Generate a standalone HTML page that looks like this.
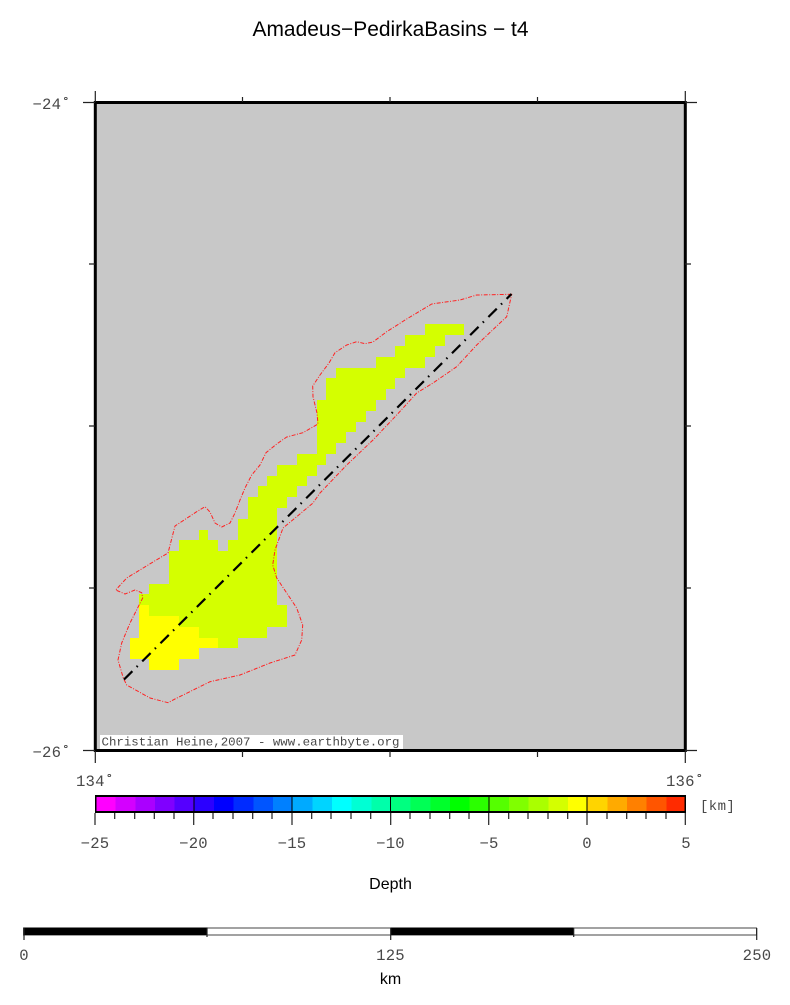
<!DOCTYPE html>
<html><head><meta charset="utf-8"><style>
html,body{margin:0;padding:0;background:#fff;width:790px;height:1005px;overflow:hidden}
svg{display:block}
.m{font-family:"Liberation Mono",monospace;font-size:15.6px;fill:#484848;letter-spacing:0.2px}
.s{font-family:"Liberation Sans",sans-serif;fill:#000}
</style></head><body>
<svg width="790" height="1005" viewBox="0 0 790 1005" xmlns="http://www.w3.org/2000/svg">
<text class="s" x="252.5" y="36" font-size="21" textLength="276" lengthAdjust="spacingAndGlyphs">Amadeus−PedirkaBasins − t4</text>
<rect x="95" y="102" width="590" height="648" fill="#c8c8c8"/>
<g fill="#d4ff00" shape-rendering="crispEdges">
<rect x="425" y="324" width="39" height="11"/><rect x="405" y="335" width="40" height="11"/><rect x="395" y="346" width="40" height="11"/><rect x="376" y="357" width="49" height="11"/><rect x="336" y="368" width="69" height="10"/><rect x="326" y="378" width="69" height="11"/><rect x="326" y="389" width="60" height="11"/><rect x="317" y="400" width="59" height="11"/><rect x="317" y="411" width="49" height="11"/><rect x="317" y="422" width="39" height="10"/><rect x="317" y="432" width="29" height="11"/><rect x="317" y="443" width="19" height="11"/><rect x="297" y="454" width="29" height="11"/><rect x="277" y="465" width="40" height="11"/><rect x="267" y="476" width="40" height="10"/><rect x="258" y="486" width="39" height="11"/><rect x="248" y="497" width="39" height="11"/><rect x="248" y="508" width="29" height="11"/><rect x="238" y="519" width="39" height="11"/><rect x="199" y="530" width="9" height="10"/><rect x="238" y="530" width="39" height="10"/><rect x="179" y="540" width="39" height="11"/><rect x="228" y="540" width="49" height="11"/><rect x="169" y="551" width="108" height="33"/><rect x="149" y="584" width="128" height="10"/><rect x="139" y="594" width="138" height="11"/><rect x="149" y="605" width="138" height="11"/><rect x="179" y="616" width="108" height="11"/><rect x="199" y="627" width="68" height="11"/><rect x="218" y="638" width="20" height="10"/>
</g>
<g fill="#ffff00" shape-rendering="crispEdges">
<rect x="139" y="605" width="10" height="11"/><rect x="139" y="616" width="40" height="11"/><rect x="139" y="627" width="60" height="11"/><rect x="130" y="638" width="88" height="10"/><rect x="130" y="648" width="69" height="11"/><rect x="149" y="659" width="30" height="11"/>
</g>
<path d="M511.7 294.3L476.7 295L460 300L431.7 304L406.7 319L386.7 331.7L373 342L365 343.7L356.7 341.7L346.7 345L335 352.7L329 363L320 375L312.7 386L313 396.7L317 413L318 424L303 432.7L286.7 437L276.7 444L266 452.7L260 465L251.7 475L245 488L240 500L235 513L230 523L221.7 527L215 523L210 512L205 506.7L196.7 511.7L175 526L168 553L153 562L126.7 578L115.7 590L125 594L135 590L141.7 592.7L142.7 598L130 623L121.7 643L118 660L123.3 678L126.7 685L150 698L168 702.7L175 699L210 681.7L240 675L270 663L295 655L301.7 640L302.7 625L296.7 608L276.7 578L272.7 565L275 550L283 528L296.7 516.7L313 503L320 493L346.7 465L373 440L396.7 415L416.7 393L433 383L456.7 366.7L476.7 345L506.7 316.7Z" fill="none" stroke="#f22" stroke-width="1" stroke-dasharray="4 1.5 1 1.5" stroke-linejoin="round"/>
<path d="M124 679.5L511.5 294" fill="none" stroke="#000" stroke-width="2.2" stroke-dasharray="11.8 6 1.5 6.4"/>
<rect x="100" y="735" width="303" height="14" fill="#fff"/>
<text x="101.5" y="745.5" font-family="'Liberation Mono',monospace" font-size="12.4" fill="#484848" textLength="298" lengthAdjust="spacingAndGlyphs">Christian Heine,2007 - www.earthbyte.org</text>
<rect x="95.3" y="102.5" width="590" height="648" fill="none" stroke="#000" stroke-width="3"/>
<g stroke="#222" stroke-width="1.2" fill="none">
<path d="M95.3 91V102M685.3 91V102M242.5 97V102M390 97V102M537.5 97V102"/>
<path d="M83 102.5H95M83 750.5H95M685 102.5H697M685 750.5H697M89 264H95M89 426H95M89 588H95M685 264H691M685 426H691M685 588H691"/>
<path d="M95.3 751V763M685.3 751V763M242.5 751V757M390 751V757M537.5 751V757"/>
</g>
<text class="m" x="32.5" y="109">−24˚</text>
<text class="m" x="32.5" y="757">−26˚</text>
<text class="m" x="76" y="786">134˚</text>
<text class="m" x="666" y="786">136˚</text>
<g shape-rendering="crispEdges">
<rect x="95" y="795" width="591" height="18" fill="#000"/>
<rect x="96.5" y="797" width="19.17" height="14" fill="#ff00ff"/><rect x="115.67" y="797" width="19.67" height="14" fill="#d400ff"/><rect x="135.33" y="797" width="19.67" height="14" fill="#aa00ff"/><rect x="155" y="797" width="19.67" height="14" fill="#8000ff"/><rect x="174.67" y="797" width="19.67" height="14" fill="#5500ff"/><rect x="194.33" y="797" width="19.67" height="14" fill="#2b00ff"/><rect x="214" y="797" width="19.67" height="14" fill="#0000ff"/><rect x="233.67" y="797" width="19.67" height="14" fill="#002bff"/><rect x="253.33" y="797" width="19.67" height="14" fill="#0055ff"/><rect x="273" y="797" width="19.67" height="14" fill="#0080ff"/><rect x="292.67" y="797" width="19.67" height="14" fill="#00aaff"/><rect x="312.33" y="797" width="19.67" height="14" fill="#00d4ff"/><rect x="332" y="797" width="19.67" height="14" fill="#00ffff"/><rect x="351.67" y="797" width="19.67" height="14" fill="#00ffd4"/><rect x="371.33" y="797" width="19.67" height="14" fill="#00ffaa"/><rect x="391" y="797" width="19.67" height="14" fill="#00ff80"/><rect x="410.67" y="797" width="19.67" height="14" fill="#00ff55"/><rect x="430.33" y="797" width="19.67" height="14" fill="#00ff2b"/><rect x="450" y="797" width="19.67" height="14" fill="#00ff00"/><rect x="469.67" y="797" width="19.67" height="14" fill="#2bff00"/><rect x="489.33" y="797" width="19.67" height="14" fill="#55ff00"/><rect x="509" y="797" width="19.67" height="14" fill="#80ff00"/><rect x="528.67" y="797" width="19.67" height="14" fill="#aaff00"/><rect x="548.33" y="797" width="19.67" height="14" fill="#d4ff00"/><rect x="568" y="797" width="19.67" height="14" fill="#ffff00"/><rect x="587.67" y="797" width="19.67" height="14" fill="#ffd400"/><rect x="607.33" y="797" width="19.67" height="14" fill="#ffaa00"/><rect x="627" y="797" width="19.67" height="14" fill="#ff8000"/><rect x="646.67" y="797" width="19.67" height="14" fill="#ff5500"/><rect x="666.33" y="797" width="18.17" height="14" fill="#ff2b00"/>
<rect x="193.5" y="797" width="1" height="15" fill="#000"/><rect x="291.5" y="797" width="1" height="15" fill="#000"/><rect x="390" y="797" width="1" height="15" fill="#000"/><rect x="488.5" y="797" width="1" height="15" fill="#000"/><rect x="586.5" y="797" width="1" height="15" fill="#000"/>
</g>
<g stroke="#222" stroke-width="1.2" fill="none">
<path d="M95 813V825M193.7 813V825M292 813V825M390.7 813V825M488.7 813V825M587 813V825M685.3 813V825"/>
<path d="M114.7 813V819M134.7 813V819M154.3 813V819M174 813V819M213 813V819M233 813V819M252.7 813V819M272 813V819M311.7 813V819M331 813V819M351 813V819M370.7 813V819M410 813V819M430 813V819M449.7 813V819M469 813V819M508.7 813V819M528 813V819M548 813V819M567.7 813V819M607 813V819M626.7 813V819M646 813V819M666 813V819"/>
</g>
<text class="m" x="95" y="848" text-anchor="middle">−25</text>
<text class="m" x="193.5" y="848" text-anchor="middle">−20</text>
<text class="m" x="292" y="848" text-anchor="middle">−15</text>
<text class="m" x="390.5" y="848" text-anchor="middle">−10</text>
<text class="m" x="489" y="848" text-anchor="middle">−5</text>
<text class="m" x="587" y="848" text-anchor="middle">0</text>
<text class="m" x="686" y="848" text-anchor="middle">5</text>
<text x="700" y="810" font-family="'Liberation Mono',monospace" font-size="14" fill="#484848" letter-spacing="0.4">[km]</text>
<text class="s" x="390.5" y="889" font-size="16" text-anchor="middle">Depth</text>
<g shape-rendering="crispEdges">
<rect x="23.5" y="928" width="733" height="7" fill="#fff" stroke="#444" stroke-width="1"/>
<rect x="23.5" y="927.5" width="184" height="7.5" fill="#000"/>
<rect x="390.5" y="927.5" width="183" height="7.5" fill="#000"/>
</g>
<g stroke="#222" stroke-width="1.2" fill="none">
<path d="M24 928V940M390.7 928V940M756.7 928V940M207 928V937M573.7 928V937"/>
</g>
<text class="m" x="24" y="960" text-anchor="middle">0</text>
<text class="m" x="390.5" y="960" text-anchor="middle">125</text>
<text class="m" x="757" y="960" text-anchor="middle">250</text>
<text class="s" x="390.5" y="984" font-size="16" text-anchor="middle">km</text>
</svg>
</body></html>
